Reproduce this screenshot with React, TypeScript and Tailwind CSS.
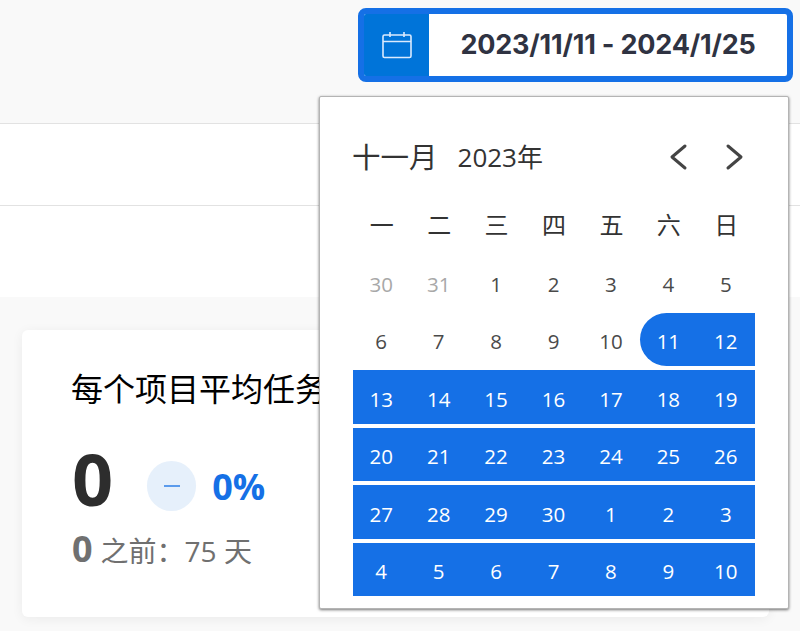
const sans = "font-['Open_Sans','Noto_Sans_CJK_SC',sans-serif]";

const weekdays = ["一", "二", "三", "四", "五", "六", "日"];
const rows: { n: number; muted?: boolean; sel?: boolean; start?: boolean }[][] = [
  [{ n: 30, muted: true }, { n: 31, muted: true }, { n: 1 }, { n: 2 }, { n: 3 }, { n: 4 }, { n: 5 }],
  [{ n: 6 }, { n: 7 }, { n: 8 }, { n: 9 }, { n: 10 }, { n: 11, sel: true, start: true }, { n: 12, sel: true }],
  [13, 14, 15, 16, 17, 18, 19].map((n) => ({ n, sel: true })),
  [20, 21, 22, 23, 24, 25, 26].map((n) => ({ n, sel: true })),
  [27, 28, 29, 30, 1, 2, 3].map((n) => ({ n, sel: true })),
  [4, 5, 6, 7, 8, 9, 10].map((n) => ({ n, sel: true })),
];

function Calendar() {
  return (
    <div className={`absolute left-[319px] top-[96px] z-10 h-[513px] w-[470px] rounded-[2px] border border-[#b4b4b4] bg-white pl-[33px] pr-[33px] pt-[38px] shadow-[0_1px_3px_rgba(0,0,0,0.55)] ${sans}`}>
      <div className="flex h-[46px] items-center pb-[2px] text-[#333333]">
        <span className="ml-[-1px] text-[28.5px] leading-none">十一月</span>
        <span className="ml-[20px] text-[26px] leading-none">2023年</span>
        <div className="ml-auto flex gap-[35px] pr-[11px]">
          <svg width="20" height="28" viewBox="0 0 20 28" fill="none" stroke="#444444" strokeWidth="3" strokeLinecap="round" strokeLinejoin="round"><path d="M16 3 L3 14 L16 25" /></svg>
          <svg width="20" height="28" viewBox="0 0 20 28" fill="none" stroke="#444444" strokeWidth="3" strokeLinecap="round" strokeLinejoin="round"><path d="M4 3 L17 14 L4 25" /></svg>
        </div>
      </div>
      <div className="mt-[22px] grid h-[44px] grid-cols-7 items-center text-center text-[24px] leading-none text-[#333333]">
        {weekdays.map((d) => (
          <span key={d}>{d}</span>
        ))}
      </div>
      <div className="mt-[8px] grid auto-rows-[57.5px] grid-cols-7">
        {rows.flat().map((c, i) => (
          <div
            key={i}
            className={`mb-[4px] flex items-center justify-center pr-[1px] pt-[4px] text-[20.5px] leading-none ${
              c.sel ? "bg-[#1570e6] text-white" : c.muted ? "text-[#a8a8a8]" : "text-[#4a4a4a]"
            } ${c.start ? "rounded-l-[27px]" : ""}`}
          >
            {c.n}
          </div>
        ))}
      </div>
    </div>
  );
}

export default function App() {
  return (
    <div className={`relative h-[631px] w-[800px] overflow-hidden bg-white ${sans}`}>
      <header className="flex h-[124px] items-start justify-end border-b border-[#e2e2e2] bg-[#f9f9f9] pr-[7px] pt-[8px]">
        <div className="flex h-[74px] w-[435px] overflow-hidden rounded-[8px] border-[6px] border-[#1570e6] bg-white">
          <div className="flex w-[65px] items-center justify-center bg-[#0074d9]">
            <svg width="32" height="28" viewBox="0 0 32 28" fill="none" stroke="#dbeafe" strokeWidth="1.6">
              <rect x="2" y="4" width="28" height="22.5" rx="1.5" />
              <path d="M2 10.5 H30 M9 1 V6 M23 1 V6" />
            </svg>
          </div>
          <div className="flex flex-1 items-center justify-center font-['Inter',sans-serif] text-[27px] font-bold tracking-[-0.2px] text-[#2f3342]">
            2023/11/11 - 2024/1/25
          </div>
        </div>
      </header>
      <div className="h-[82px] border-b border-[#e2e2e2]" />
      <div className="h-[91px]" />
      <main className="h-[334px] bg-[#f9f9f9] pl-[22px] pt-[33px]">
        <section className="h-[287px] w-[747px] rounded-[6px] bg-white pl-[50px] pt-[40px] shadow-[0_2px_12px_rgba(0,0,0,0.06)]">
          <h2 className="ml-[-1px] whitespace-nowrap text-[32px] font-normal leading-[38px] text-black">每个项目平均任务数</h2>
          <div className="mt-[35px] flex h-[70px] items-center">
            <span className="text-[72px] font-bold leading-none text-[#2d2d2d]">0</span>
            <span className="ml-[34px] mt-[15px] flex h-[50px] w-[49px] items-center justify-center rounded-full bg-[#e6f0fb]">
              <span className="h-[2px] w-[16px] bg-[#5b9bec]" />
            </span>
            <span className="ml-[16px] mt-[18px] text-[36px] font-bold leading-none text-[#1570e6]">0%</span>
          </div>
          <div className="mt-[16px] flex items-baseline text-[#707070]">
            <span className="text-[36px] font-bold leading-[40px]">0</span>
            <span className="ml-[8px] text-[28px] leading-[40px]">之前：75 天</span>
          </div>
        </section>
      </main>
      <Calendar />
    </div>
  );
}
